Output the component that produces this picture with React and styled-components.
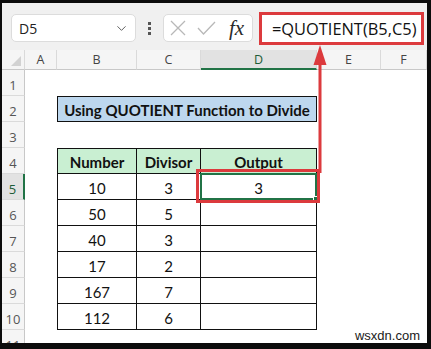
import React from 'react';
import styled, { createGlobalStyle } from 'styled-components';
import { ChevronDown } from 'lucide-react';

const GlobalStyle = createGlobalStyle`
  html, body {
    margin: 0;
    padding: 0;
    background: #ffffff;
  }
  * {
    box-sizing: border-box;
  }
`;

const RED = '#dc3a3d';
const GREEN = '#217346';

const Frame = styled.div`
  position: relative;
  width: 431px;
  height: 349px;
  overflow: hidden;
  background: #f3f3f3;
  border-style: solid;
  border-color: #0c0c0c;
  border-width: 3px 4px 6px 2px;
  font-family: 'Open Sans', 'Noto Sans', sans-serif;
`;

const Toolbar = styled.div`
  display: flex;
  align-items: center;
  height: 47px;
  padding: 3px 0 0 9px;
  background: #f0f0f0;
`;

const NameBox = styled.div`
  display: flex;
  align-items: center;
  justify-content: space-between;
  width: 125px;
  height: 28px;
  padding: 0 6px 0 7px;
  background: #fff;
  border: 1px solid #dcdcdc;
  border-radius: 5px;
  font-size: 14px;
  color: #222;
  svg {
    color: #555;
  }
`;

const Dots = styled.div`
  display: flex;
  flex-direction: column;
  align-items: center;
  justify-content: center;
  gap: 2px;
  width: 27px;
  span {
    width: 3px;
    height: 3px;
    background: #555;
  }
`;

const FxBox = styled.div`
  display: flex;
  align-items: center;
  gap: 11px;
  width: 90px;
  height: 28px;
  padding-left: 6px;
  background: #fff;
  border: 1px solid #dcdcdc;
  border-radius: 5px;
  color: #b8b8b8;
`;

const Fx = styled.span`
  margin-left: 2px;
  font-family: 'Liberation Serif', serif;
  font-style: italic;
  font-size: 21px;
  color: #2a2a2a;
`;

const FormulaBox = styled.div`
  display: flex;
  align-items: center;
  width: 165px;
  height: 33px;
  margin-left: 6px;
  padding-left: 10px;
  background: #fff;
  border: 3px solid ${RED};
  font-size: 16.4px;
  color: #111;
  white-space: nowrap;
`;

const Sheet = styled.div`
  display: grid;
  grid-template-columns: 23px 32px 80px 64px 116px 64px 1fr;
  grid-template-rows: 20px repeat(11, 26px);
  background: #fff;
  font-family: 'Lato', 'Liberation Sans', sans-serif;
`;

const ColHead = styled.div`
  display: flex;
  align-items: center;
  justify-content: center;
  font-family: 'Open Sans', sans-serif;
  font-size: 12.5px;
  color: ${(p) => (p.$active ? '#1d5c37' : '#444')};
  background: ${(p) => (p.$active ? '#e2e2e2' : '#f5f5f5')};
  border-right: 1px solid #dadada;
  border-bottom: ${(p) => (p.$active ? `2px solid ${GREEN}` : '1px solid #c8c8c8')};
`;

const Corner = styled(ColHead)`
  position: relative;
  &::after {
    content: '';
    position: absolute;
    right: 3px;
    bottom: 3px;
    border-style: solid;
    border-width: 0 0 10px 10px;
    border-color: transparent transparent #d2d2d2 transparent;
  }
`;

const RowHead = styled.div`
  display: flex;
  align-items: center;
  justify-content: center;
  padding-top: 4px;
  font-family: 'Open Sans', sans-serif;
  font-size: 13px;
  color: ${(p) => (p.$active ? '#1d5c37' : '#555')};
  background: ${(p) => (p.$active ? '#e2e2e2' : '#f5f5f5')};
  border-bottom: 1px solid #dadada;
  border-right: ${(p) => (p.$active ? `2px solid ${GREEN}` : '1px solid #c8c8c8')};
`;

const Cell = styled.div`
  display: flex;
  align-items: center;
  justify-content: center;
  font-size: 15px;
  color: #111;
`;

const TableCell = styled(Cell)`
  position: relative;
  padding-top: 2px;
  font-weight: ${(p) => (p.$head ? 700 : 400)};
  background: ${(p) => (p.$head ? '#c9efd2' : '#fff')};
  border-right: 1px solid #111;
  border-bottom: 1px solid #111;
  border-left: ${(p) => (p.$first ? '1px solid #111' : 'none')};
  border-top: ${(p) => (p.$head ? '1px solid #111' : 'none')};
`;

const Selected = styled(TableCell)`
  &::after {
    content: '';
    position: absolute;
    inset: -1px -1px -1px -1px;
    border: 2px solid ${GREEN};
  }
  &::before {
    content: '';
    position: absolute;
    inset: -5px -4px -4px -5px;
    border: 3px solid ${RED};
    z-index: 2;
  }
`;

const Handle = styled.span`
  position: absolute;
  right: -2px;
  bottom: -2px;
  width: 5px;
  height: 5px;
  background: ${GREEN};
  border: 1px solid #fff;
  z-index: 1;
`;

const Title = styled(Cell)`
  grid-column: span 3;
  padding-top: 2px;
  font-weight: 700;
  background: #bdd7ee;
  border: 1px solid #111;
`;

const Arrow = styled.svg`
  position: absolute;
  left: 308px;
  top: 40px;
  z-index: 3;
`;

const Watermark = styled.div`
  position: absolute;
  right: 7px;
  bottom: 0;
  font-family: 'Liberation Sans', sans-serif;
  font-size: 13px;
  line-height: 15px;
  color: #1a1a1a;
  z-index: 3;
`;

const CancelIcon = () => (
  <svg width="16" height="16" viewBox="0 0 16 16" fill="none" stroke="currentColor" strokeWidth="1.3">
    <path d="M1 1 L15 15 M15 1 L1 15" />
  </svg>
);

const EnterIcon = () => (
  <svg width="19" height="14" viewBox="0 0 19 14" fill="none" stroke="currentColor" strokeWidth="1.3">
    <path d="M1 7 L6.5 13 L18 1" />
  </svg>
);

const columns = ['A', 'B', 'C', 'D', 'E', 'F'];

const data = [
  ['10', '3', '3'],
  ['50', '5', ''],
  ['40', '3', ''],
  ['17', '2', ''],
  ['167', '7', ''],
  ['112', '6', ''],
];

const renderRow = (n) => {
  const cells = [<RowHead key="h" $active={n === 5}>{n}</RowHead>];
  if (n === 2) {
    cells.push(<Cell key="a" />);
    cells.push(<Title key="t">Using QUOTIENT Function to Divide</Title>);
    cells.push(<Cell key="e" />, <Cell key="f" />);
  } else if (n === 4) {
    cells.push(<Cell key="a" />);
    cells.push(
      <TableCell key="b" $head $first>Number</TableCell>,
      <TableCell key="c" $head>Divisor</TableCell>,
      <TableCell key="d" $head>Output</TableCell>
    );
    cells.push(<Cell key="e" />, <Cell key="f" />);
  } else if (n >= 5 && n <= 10) {
    const [num, div, out] = data[n - 5];
    cells.push(<Cell key="a" />);
    cells.push(
      <TableCell key="b" $first>{num}</TableCell>,
      <TableCell key="c">{div}</TableCell>
    );
    cells.push(
      n === 5 ? (
        <Selected key="d">{out}<Handle /></Selected>
      ) : (
        <TableCell key="d">{out}</TableCell>
      )
    );
    cells.push(<Cell key="e" />, <Cell key="f" />);
  } else {
    columns.forEach((c) => cells.push(<Cell key={c} />));
  }
  return cells;
};

export default function App() {
  const rows = [1, 2, 3, 4, 5, 6, 7, 8, 9, 10, 11];
  return (
    <>
      <GlobalStyle />
      <Frame>
        <Toolbar>
          <NameBox>
            <span>D5</span>
            <ChevronDown size={15} strokeWidth={1.5} />
          </NameBox>
          <Dots>
            <span />
            <span />
            <span />
          </Dots>
          <FxBox>
            <CancelIcon />
            <EnterIcon />
            <Fx>fx</Fx>
          </FxBox>
          <FormulaBox>=QUOTIENT(B5,C5)</FormulaBox>
        </Toolbar>
        <Sheet>
          <Corner />
          {columns.map((c) => (
            <ColHead key={c} $active={c === 'D'}>{c}</ColHead>
          ))}
          {rows.map((n) => renderRow(n))}
        </Sheet>
        <Arrow width="20" height="132" viewBox="0 0 20 132">
          <rect x="8.5" y="18" width="3" height="112" fill={RED} />
          <polygon points="10,2 3.5,22 16.5,22" fill={RED} />
        </Arrow>
        <Watermark>wsxdn.com</Watermark>
      </Frame>
    </>
  );
}
